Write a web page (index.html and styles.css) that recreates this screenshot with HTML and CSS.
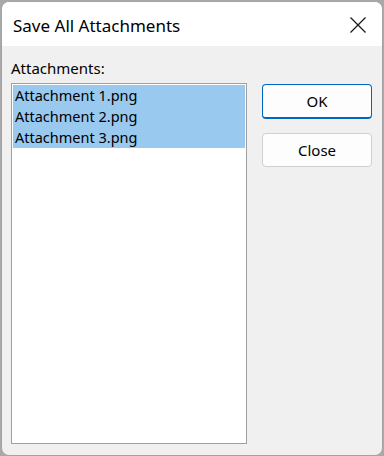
FILE: index.html
```html
<!DOCTYPE html>
<html>
<head>
<meta charset="utf-8">
<link rel="stylesheet" href="styles.css">
</head>
<body>
<div class="window">
  <div class="titlebar">
    <span class="title">Save All Attachments</span>
    <span class="close" aria-label="Close">
      <svg width="16" height="16" viewBox="0 0 16 16"><path d="M0.5 0.5 L15.5 15.5 M15.5 0.5 L0.5 15.5" stroke="#1a1a1a" stroke-width="1.3" fill="none"/></svg>
    </span>
  </div>
  <div class="content">
    <div class="label">Attachments:</div>
    <div class="main">
      <div class="listbox">
        <div class="item">Attachment 1.png</div>
        <div class="item">Attachment 2.png</div>
        <div class="item">Attachment 3.png</div>
      </div>
      <div class="buttons">
        <button class="btn btn-default">OK</button>
        <button class="btn">Close</button>
      </div>
    </div>
  </div>
</div>
</body>
</html>
```
FILE: styles.css
```css
html, body {
  margin: 0;
  padding: 0;
  background: #a9a9a9;
  width: 384px;
  height: 456px;
  overflow: hidden;
}
body {
  font-family: "Noto Sans", "Open Sans", sans-serif;
  color: #000;
}
.window {
  box-sizing: border-box;
  margin: 1px 0 0 1px;
  width: 382px;
  height: 455px;
  border: 1px solid #a3a3a3;
  border-radius: 8px;
  background: #f0f0f0;
  overflow: hidden;
  display: flex;
  flex-direction: column;
}
.titlebar {
  height: 44px;
  background: #fff;
  display: flex;
  align-items: center;
  justify-content: space-between;
  padding: 2px 16px 0 11px;
  box-sizing: border-box;
  flex: none;
}
.title {
  font-size: 17px;
  color: #000;
}
.close {
  display: flex;
  width: 16px;
  height: 16px;
}
.content {
  padding: 13px 9px 0 9px;
  flex: 1;
  display: flex;
  flex-direction: column;
}
.label {
  font-size: 15px;
  line-height: 20px;
  height: 24px;
  margin-top: -1px;
  margin-bottom: 1px;
}
.main {
  display: flex;
  gap: 15px;
}
.listbox {
  box-sizing: border-box;
  width: 236px;
  height: 361px;
  border: 1px solid #a0a0a0;
  background: #fff;
  padding: 1px;
}
.item {
  background: #99c9ef;
  font-size: 14.5px;
  line-height: 21px;
  padding-left: 2px;
  color: #000;
}
.buttons {
  display: flex;
  flex-direction: column;
  gap: 14px;
  padding-top: 1px;
}
.btn {
  box-sizing: border-box;
  width: 110px;
  height: 34px;
  background: #fdfdfd;
  border: 1px solid #d0d0d0;
  border-radius: 4px;
  font-family: "Noto Sans", "Open Sans", sans-serif;
  font-size: 15px;
  color: #000;
  padding: 0;
}
.btn-default {
  height: 35px;
  border: 1px solid #0067c0;
  border-bottom-width: 2px;
}
```
